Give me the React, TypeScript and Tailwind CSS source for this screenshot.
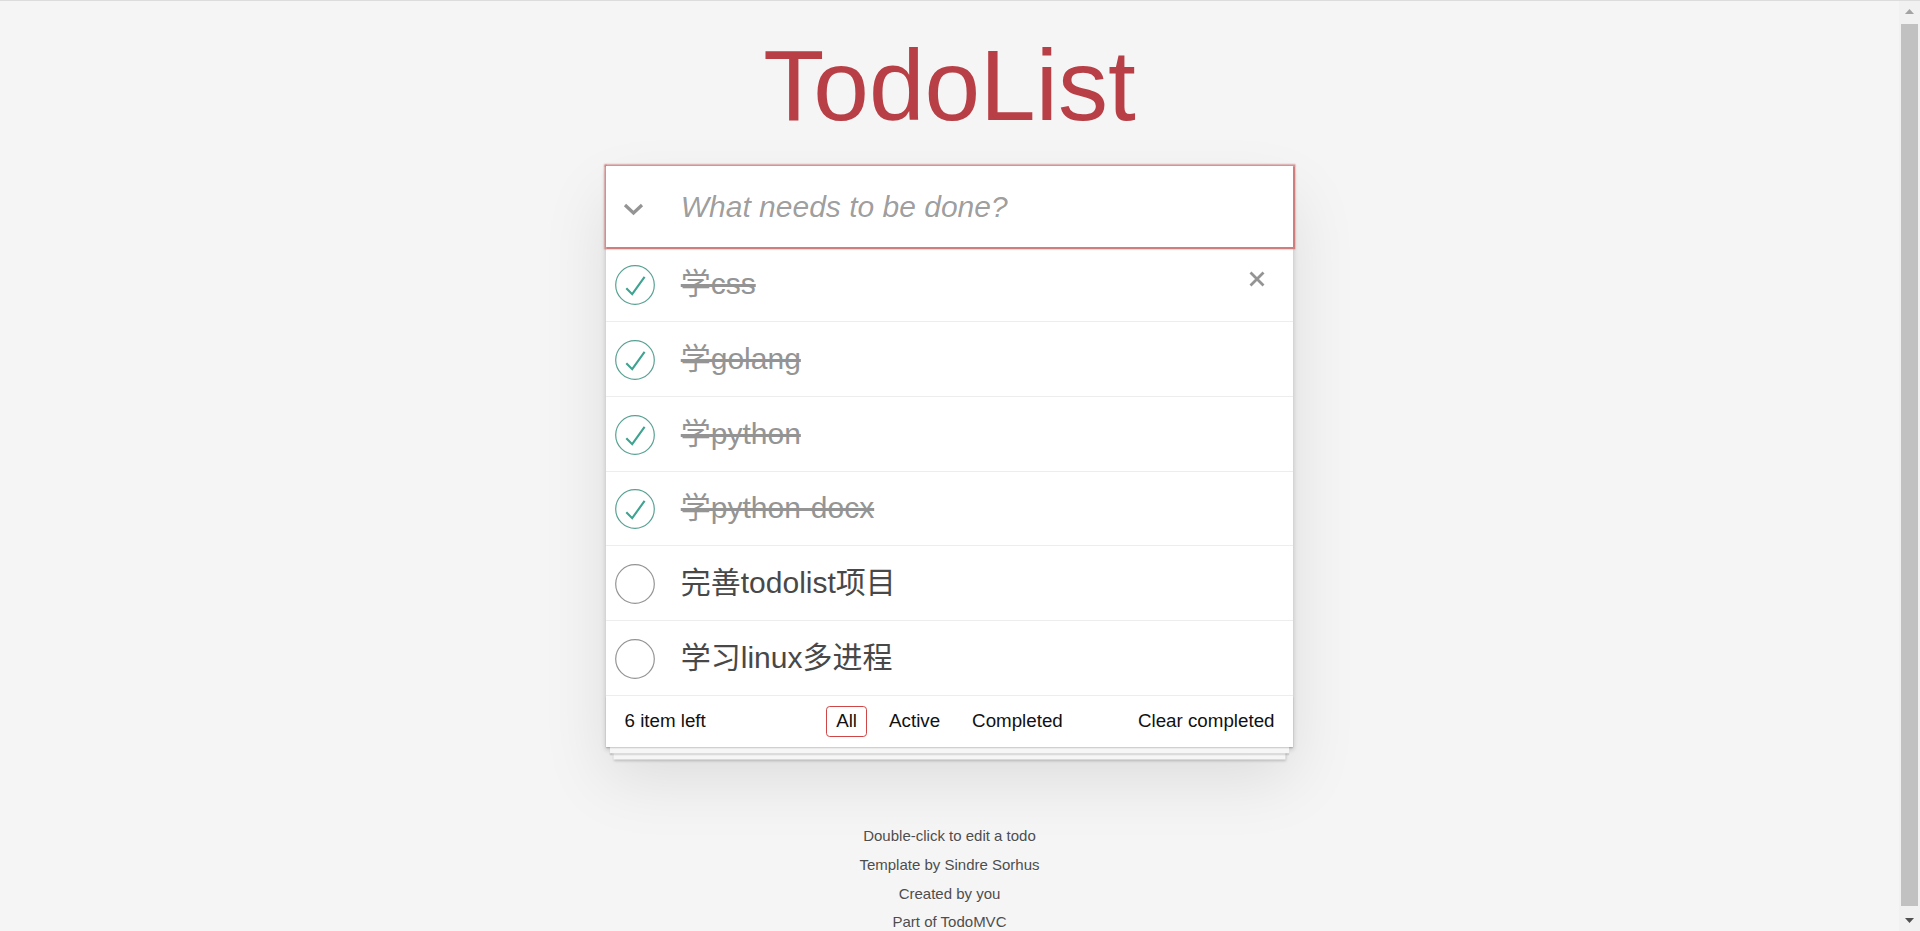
import { useState } from "react";

type Todo = { id: number; title: string; done: boolean };

const initialTodos: Todo[] = [
  { id: 1, title: "学css", done: true },
  { id: 2, title: "学golang", done: true },
  { id: 3, title: "学python", done: true },
  { id: 4, title: "学python-docx", done: true },
  { id: 5, title: "完善todolist项目", done: false },
  { id: 6, title: "学习linux多进程", done: false },
];

const filters = ["All", "Active", "Completed"];

function Toggle({ done }: { done: boolean }) {
  return (
    <svg width="50" height="50" viewBox="0 0 50 50" className="mt-[2px] ml-[4px] shrink-0">
      <circle
        cx="25"
        cy="25"
        r="19.3"
        fill="none"
        stroke={done ? "#59a193" : "#949494"}
        strokeWidth="1.2"
      />
      {done && (
        <path
          d="M16.3 28.2 L22.2 34.2 L34.6 16.8"
          fill="none"
          stroke="#3ea390"
          strokeWidth="2.1"
        />
      )}
    </svg>
  );
}

// the window's scrollbar, as it shows in the screenshot
function Scrollbar() {
  return (
    <aside className="flex w-[21px] shrink-0 flex-col bg-[#f1f1f1]">
      <div className="flex h-[21px] items-center justify-center">
        <svg width="9" height="5" viewBox="0 0 9 5">
          <path d="M0 5 L4.5 0 L9 5 Z" fill="#a3a3a3" />
        </svg>
      </div>
      <div className="mx-[2px] mt-[2px] mb-[4px] flex-1 bg-[#c1c1c1]" />
      <div className="flex h-[21px] items-center justify-center">
        <svg width="9" height="5" viewBox="0 0 9 5">
          <path d="M0 0 L9 0 L4.5 5 Z" fill="#505050" />
        </svg>
      </div>
    </aside>
  );
}

export default function App() {
  const [todos] = useState(initialTodos);

  return (
    <div className="flex h-screen overflow-hidden border-t border-[#dcdcdc] bg-[#f5f5f5] font-['Liberation_Sans','Noto_Sans_CJK_SC',sans-serif] text-[17.5px] leading-[24.5px] text-[#111111]">
      <main className="flex-1 overflow-hidden">
        <div className="mx-auto w-[687.5px] pt-[34px] pb-[14px]">
          <h1 className="mb-[31px] h-[100px] text-center text-[100px] leading-[100px] font-extralight text-[#b83f45]">
            TodoList
          </h1>

          <section className="bg-white shadow-[0_2.5px_5px_0_rgba(0,0,0,0.2),0_31px_62px_0_rgba(0,0,0,0.1)]">
            <header className="relative z-10 flex h-[81.25px] items-center bg-white shadow-[0_0_1.5px_2.5px_#cf7d7d]">
              <div className="w-[75px] shrink-0 pl-[17px] pt-[5px]">
                <svg width="21" height="13" viewBox="0 0 21 13">
                  <path
                    d="M2 2 L10.5 10 L19 2"
                    fill="none"
                    stroke="#949494"
                    strokeWidth="3.2"
                  />
                </svg>
              </div>
              <input
                className="h-[42px] w-full pr-[20px] text-[30px] leading-[42px] text-[#484848] outline-none placeholder:italic placeholder:text-black/40"
                placeholder="What needs to be done?"
              />
            </header>

            <ul>
              {todos.map((todo, i) => (
                <li
                  key={todo.id}
                  className="relative flex h-[74.75px] items-center border-b border-[#ededed]"
                >
                  <Toggle done={todo.done} />
                  <label
                    className={
                      todo.done
                        ? "ml-[21px] text-[30px] leading-[36px] text-[#949494] line-through"
                        : "ml-[21px] text-[30px] leading-[36px] text-[#484848]"
                    }
                  >
                    {todo.title}
                  </label>
                  {i === 0 && (
                    <button className="absolute top-[23px] right-[28px] flex h-[17px] w-[17px] items-center justify-center">
                      <svg width="16" height="16" viewBox="0 0 16 16">
                        <path
                          d="M1.5 1.5 L14.5 14.5 M14.5 1.5 L1.5 14.5"
                          stroke="#949494"
                          strokeWidth="2.8"
                        />
                      </svg>
                    </button>
                  )}
                </li>
              ))}
            </ul>

            <footer className="grid h-[51.25px] grid-cols-[1fr_auto_1fr] items-center bg-white px-[18.75px] text-[18.75px] shadow-[0_1.25px_1.25px_rgba(0,0,0,0.2),0_10px_0_-3.75px_#f6f6f6,0_11.25px_1.25px_-3.75px_rgba(0,0,0,0.2),0_20px_0_-7.5px_#f6f6f6,0_21.25px_2.5px_-7.5px_rgba(0,0,0,0.2)]">
              <span className="text-left">6 item left</span>
              <ul className="flex gap-[5px]">
                {filters.map((f) => (
                  <li key={f}>
                    <a
                      className={
                        f === "All"
                          ? "mx-[3.75px] block rounded-[3.75px] border border-[#ce4646] px-[8.75px] py-[3.75px] leading-[22px]"
                          : "mx-[3.75px] block rounded-[3.75px] border border-transparent px-[8.75px] py-[3.75px] leading-[22px]"
                      }
                    >
                      {f}
                    </a>
                  </li>
                ))}
              </ul>
              <button className="justify-self-end">Clear completed</button>
            </footer>
          </section>

          <footer className="mt-[81px] flex flex-col items-center gap-[13.75px] text-[15px] leading-[15px] text-[#4d4d4d] [text-shadow:0_1px_0_rgba(255,255,255,0.5)]">
            <p>Double-click to edit a todo</p>
            <p>Template by Sindre Sorhus</p>
            <p>Created by you</p>
            <p>Part of TodoMVC</p>
          </footer>
        </div>
      </main>
      <Scrollbar />
    </div>
  );
}
